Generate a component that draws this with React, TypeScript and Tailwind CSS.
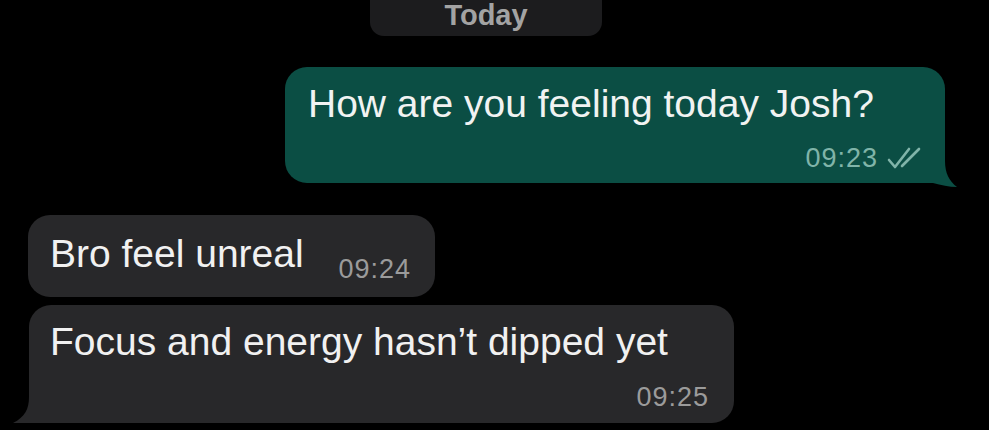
import React from "react";

const font = { fontFamily: '"Liberation Sans", Arial, sans-serif' };

function DoubleCheck() {
  return (
    <svg width="36" height="22" viewBox="0 0 36 22" fill="none" className="ml-[9px] mb-[1px]">
      <path d="M2 13 L8 20 L22 2" stroke="#80b4a9" strokeWidth="2.6" strokeLinecap="round" strokeLinejoin="round" />
      <path d="M15 19 L32 2" stroke="#80b4a9" strokeWidth="2.6" strokeLinecap="round" />
    </svg>
  );
}

export default function App() {
  return (
    <div className="w-[989px] h-[430px] bg-black overflow-hidden flex flex-col" style={font}>
      {/* Today pill */}
      <div className="ml-[370px] -mt-[14px] w-[232px] h-[50px] rounded-[14px] bg-[#1c1c1e] flex items-end justify-center pb-[6px]">
        <span className="text-[29px] leading-[30px] font-semibold text-[#a3a3a3]">Today</span>
      </div>

      {/* Outgoing */}
      <div className="relative self-end mr-[44px] mt-[31px] w-[660px] h-[116px] rounded-[22px] rounded-br-none bg-[#0b4e44] pl-[23px] pr-[22px] pt-[14px]">
        <svg className="absolute right-[-14px] bottom-[-4px] overflow-visible" width="30" height="26" viewBox="0 0 30 26">
          <path d="M0 0 H16 C16 12 20 20 28 26 C20 26 12 24 4 22 L0 22 Z" fill="#0b4e44" />
        </svg>
        <div className="text-[39px] leading-[46px] text-[#f1f3f2]">How are you feeling today Josh?</div>
        <div className="flex items-end justify-end mt-[19px]">
          <span className="text-[27px] leading-[24px] tracking-[1px] text-[#80b4a9]">09:23</span>
          <DoubleCheck />
        </div>
      </div>

      {/* Incoming 1 */}
      <div className="ml-[28px] mt-[32px] w-[407px] h-[82px] rounded-[22px] bg-[#28282a] pl-[22px] pr-[24px] pt-[16px] flex items-start justify-between">
        <div className="text-[39px] leading-[46px] text-[#f1f1f1]">Bro feel unreal</div>
        <div className="text-[27px] leading-[24px] tracking-[1px] text-[#9b9b9b] mt-[26px]">09:24</div>
      </div>

      {/* Incoming 2 */}
      <div className="relative ml-[29px] mt-[8px] w-[705px] h-[118px] rounded-[22px] rounded-bl-none bg-[#28282a] pl-[21px] pr-[25px] pt-[14px]">
        <svg className="absolute left-[-16px] bottom-[0px] overflow-visible" width="30" height="26" viewBox="0 0 30 26">
          <path d="M30 0 H16 C16 12 12 20 0 26 C8 26 16 26 26 26 L30 26 Z" fill="#28282a" />
        </svg>
        <div className="text-[39px] leading-[46px] text-[#f1f1f1]">Focus and energy hasn’t dipped yet</div>
        <div className="flex justify-end mt-[20px]">
          <span className="text-[27px] leading-[24px] tracking-[1px] text-[#9b9b9b]">09:25</span>
        </div>
      </div>
    </div>
  );
}
